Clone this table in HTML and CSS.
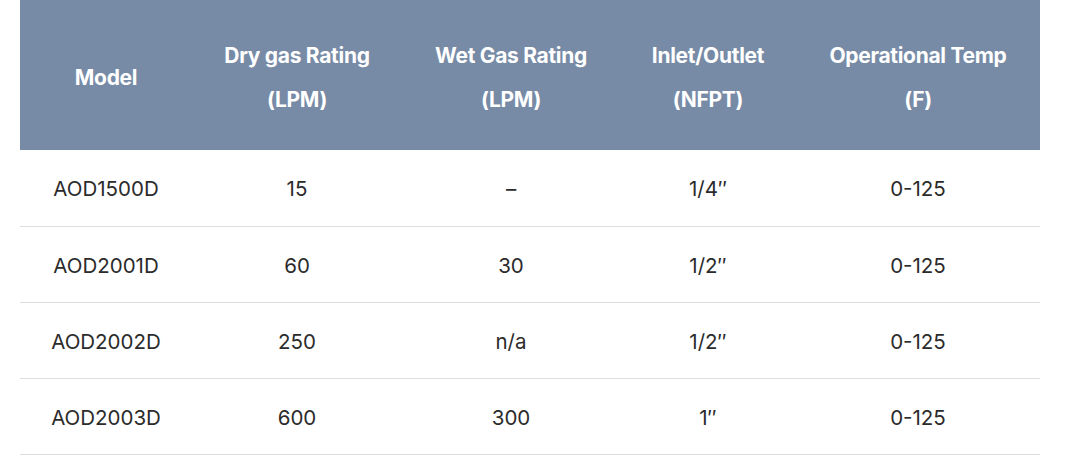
FILE: index.html
```html
<!DOCTYPE html>
<html>
<head>
<meta charset="utf-8">
<link rel="stylesheet" href="styles.css">
</head>
<body>
<div class="wrap">
<table class="spec">
  <colgroup>
    <col class="c1"><col class="c2"><col class="c3"><col class="c4"><col class="c5">
  </colgroup>
  <thead>
    <tr>
      <th>Model</th>
      <th>Dry gas Rating<br>(LPM)</th>
      <th>Wet Gas Rating<br>(LPM)</th>
      <th>Inlet/Outlet<br>(NFPT)</th>
      <th>Operational Temp<br>(F)</th>
    </tr>
  </thead>
  <tbody>
    <tr><td>AOD1500D</td><td>15</td><td>–</td><td>1/4″</td><td>0-125</td></tr>
    <tr><td>AOD2001D</td><td>60</td><td>30</td><td>1/2″</td><td>0-125</td></tr>
    <tr><td>AOD2002D</td><td>250</td><td>n/a</td><td>1/2″</td><td>0-125</td></tr>
    <tr><td>AOD2003D</td><td>600</td><td>300</td><td>1″</td><td>0-125</td></tr>
  </tbody>
</table>
</div>
</body>
</html>
```
FILE: styles.css
```css
html, body {
  margin: 0;
  padding: 0;
  background: #ffffff;
}
body {
  font-family: Inter, "Noto Sans", sans-serif;
  color: #2b2b2b;
}
.wrap {
  padding: 0 28px 0 20px;
}
.spec {
  width: 1020px;
  border-collapse: collapse;
  table-layout: fixed;
}
.c1 { width: 172px; }
.c2 { width: 210px; }
.c3 { width: 218px; }
.c4 { width: 176px; }
.c5 { width: 244px; }
.spec th {
  background: #778ba6;
  color: #ffffff;
  font-weight: 700;
  font-size: 21px;
  line-height: 44px;
  height: 150px;
  padding: 6px 4px 0;
  text-align: center;
  vertical-align: middle;
  box-sizing: border-box;
  letter-spacing: -0.3px;
}
.spec td {
  font-size: 20.5px;
  line-height: 26px;
  height: 76px;
  padding: 3px 4px 0;
  text-align: center;
  vertical-align: middle;
  border-bottom: 1px solid #dddddd;
  box-sizing: border-box;
}
```
